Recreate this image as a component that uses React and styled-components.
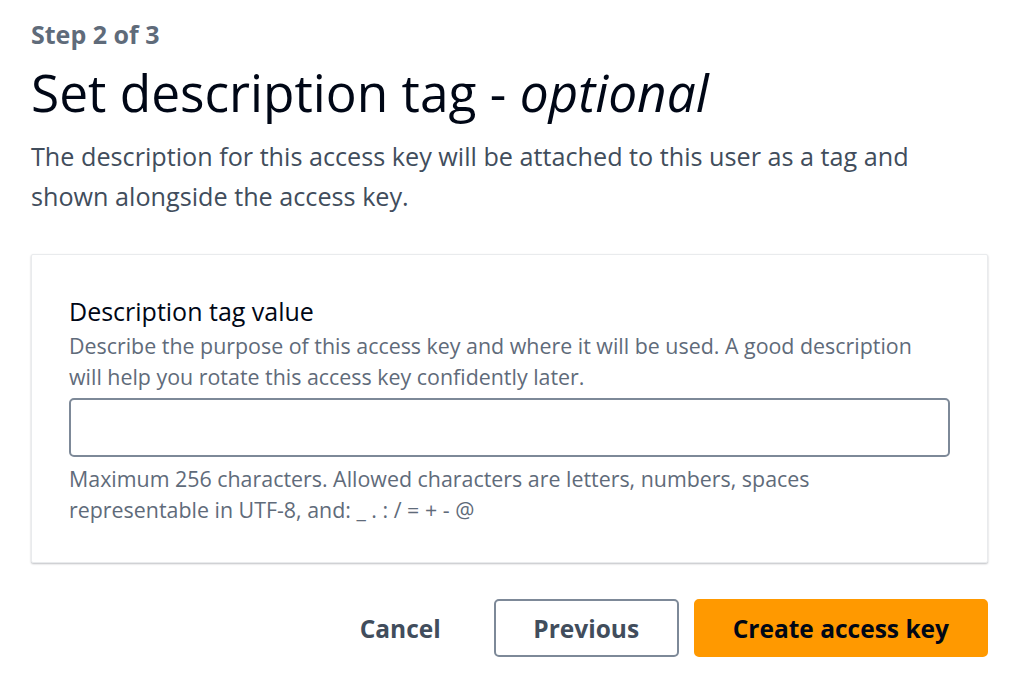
import React from "react";
import styled, { createGlobalStyle } from "styled-components";

const GlobalStyle = createGlobalStyle`
  body {
    margin: 0;
    background: #ffffff;
    font-family: "Open Sans", "Noto Sans", sans-serif;
    color: #000716;
  }
`;

const Page = styled.main`
  padding: 16px 36px 0 31px;
`;

const StepLabel = styled.div`
  font-size: 25px;
  font-weight: 700;
  line-height: 36px;
  color: #5f6b7a;
`;

const Title = styled.h1`
  margin: 6px 0 0;
  font-size: 51.4px;
  font-weight: 400;
  line-height: 68px;
  color: #000716;

  em {
    font-style: italic;
  }
`;

const Intro = styled.p`
  margin: 10px 0 0;
  font-size: 25.2px;
  line-height: 40px;
  color: #414d5c;
`;

const Container = styled.section`
  margin-top: 38px;
  padding: 40px 37px 37px;
  background: #ffffff;
  border: 1px solid #e9ebed;
  border-radius: 2px;
  box-shadow: 0 1px 2px rgba(0, 7, 22, 0.25);
`;

const Label = styled.label`
  display: block;
  margin-bottom: 3px;
  font-size: 25px;
  line-height: 32px;
  color: #000716;
`;

const Hint = styled.div`
  font-size: 21.4px;
  line-height: 31px;
  color: #5f6b7a;
`;

const Input = styled.input`
  display: block;
  box-sizing: border-box;
  width: 100%;
  height: 59px;
  margin: 6px 0 6px;
  padding: 0 16px;
  border: 2px solid #7d8998;
  border-radius: 5px;
  font: inherit;
  font-size: 21px;
  outline: none;
`;

const Actions = styled.div`
  display: flex;
  justify-content: flex-end;
  align-items: center;
  gap: 15px;
  margin-top: 36px;
`;

const Button = styled.button`
  box-sizing: border-box;
  height: 58px;
  padding: 0 ${(p) => (p.$variant === "link" ? "36px" : "37px")};
  border-radius: 5px;
  font-family: inherit;
  font-size: 24.5px;
  font-weight: 700;
  cursor: pointer;
  border: 2px solid
    ${(p) =>
      p.$variant === "normal" ? "#7d8998" : p.$variant === "primary" ? "#ff9900" : "transparent"};
  background: ${(p) => (p.$variant === "primary" ? "#ff9900" : "#ffffff")};
  color: ${(p) => (p.$variant === "primary" ? "#000716" : "#414d5c")};
  min-width: ${(p) => (p.$variant === "normal" ? "185px" : "auto")};
`;

export default function App() {
  return (
    <>
      <GlobalStyle />
      <Page>
        <StepLabel>Step 2 of 3</StepLabel>
        <Title>
          Set description tag - <em>optional</em>
        </Title>
        <Intro>
          The description for this access key will be attached to this user as a tag and
          <br />
          shown alongside the access key.
        </Intro>
        <Container>
          <Label htmlFor="desc-tag">Description tag value</Label>
          <Hint>
            Describe the purpose of this access key and where it will be used. A good description
            <br />
            will help you rotate this access key confidently later.
          </Hint>
          <Input id="desc-tag" type="text" />
          <Hint>
            Maximum 256 characters. Allowed characters are letters, numbers, spaces
            <br />
            representable in UTF-8, and: _ . : / = + - @
          </Hint>
        </Container>
        <Actions>
          <Button $variant="link">Cancel</Button>
          <Button $variant="normal">Previous</Button>
          <Button $variant="primary">Create access key</Button>
        </Actions>
      </Page>
    </>
  );
}
